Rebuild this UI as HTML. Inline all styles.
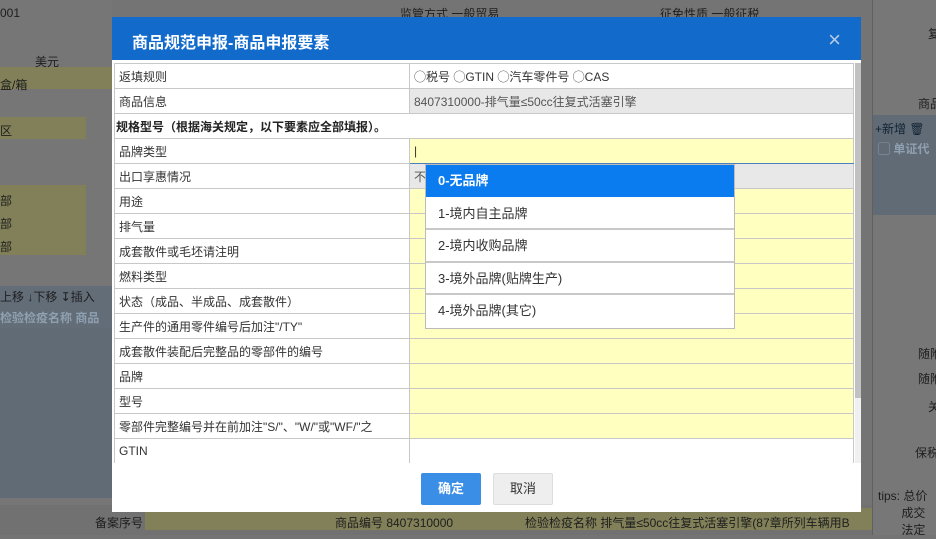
<!DOCTYPE html>
<html><head><meta charset="utf-8"><style>
*{box-sizing:border-box;margin:0;padding:0}
body{width:936px;height:535px;overflow:hidden;position:relative;background:#747474;font-family:"Liberation Sans","Noto Sans CJK SC",sans-serif;font-size:12px;color:#333}
.bg{position:absolute;font-size:12px;color:#1e1e1e;white-space:nowrap}
.ab{position:absolute}
#dlg{position:absolute;left:112px;top:17px;width:749px;height:495px;background:#fff}
#hd{height:43px;background:#126bcb;color:#fff;font-size:16px;font-weight:bold;padding:12px 0 0 20px;position:relative}
#hd .x{position:absolute;right:20px;top:10px;font-weight:normal;font-size:22px;color:#b8cbe6}
table{border-collapse:collapse;position:absolute;left:2px;top:46px;width:740px}
td{border:1px solid #c8c8c8;height:25px;padding:0 4px;font-size:12px;color:#333;vertical-align:middle;white-space:nowrap}
td.k{width:295px}
td.y{background:#ffffc0}
td.g{background:#e8e8e8;color:#555}
#dd{position:absolute;left:425px;top:164px;width:310px;background:#fff;border:1px solid #bbb}
#dd div{height:32.6px;line-height:32px;padding-left:12px;font-size:13px;color:#333;border-bottom:2px solid #c8c8c8}
#dd div.s{background:#0a7cf0;color:#fff;font-weight:bold;border-bottom:1px solid #fff}
</style></head><body>
<div class="ab" style="left:0;top:0;width:112px;height:535px;background:#767676"></div>
<div class="ab" style="left:0;top:67px;width:112px;height:22px;background:#818059"></div>
<div class="ab" style="left:0;top:117px;width:86px;height:22px;background:#818059"></div>
<div class="ab" style="left:0;top:185px;width:86px;height:70px;background:#818059"></div>
<div class="bg" style="left:0;top:6px">001</div>
<div class="bg" style="left:35px;top:53px">美元</div>
<div class="bg" style="left:0;top:76px">盒/箱</div>
<div class="bg" style="left:0;top:122px">区</div>
<div class="bg" style="left:0;top:192px">部</div>
<div class="bg" style="left:0;top:215px">部</div>
<div class="bg" style="left:0;top:238px">部</div>
<div class="ab" style="left:0;top:286px;width:112px;height:42px;background:#636d78"></div>
<div class="bg" style="left:0;top:288px">上移 ↓下移 ↧插入</div>
<div class="bg" style="left:0;top:309px;color:#8fa0b0;font-weight:bold">检验检疫名称 商品</div>
<div class="ab" style="left:0;top:328px;width:112px;height:170px;background:#616b76"></div>
<div class="ab" style="left:0;top:505px;width:936px;height:30px;background:#717171"></div>
<div class="ab" style="left:145px;top:508px;width:750px;height:22px;background:#818059"></div>
<div class="bg" style="left:95px;top:514px">备案序号</div>
<div class="bg" style="left:335px;top:514px">商品编号 8407310000</div>
<div class="bg" style="left:525px;top:514px">检验检疫名称 排气量≤50cc往复式活塞引擎(87章所列车辆用B</div>
<div class="bg" style="left:400px;top:5px">监管方式 一般贸易</div>
<div class="bg" style="left:660px;top:5px">征免性质 一般征税</div>
<div class="ab" style="left:872px;top:0;width:64px;height:535px;background:#777;border-left:1px solid #606060"></div>
<div class="bg" style="left:928px;top:25px">复</div>
<div class="bg" style="left:918px;top:95px">商品</div>
<div class="ab" style="left:873px;top:115px;width:63px;height:100px;background:#616b76"></div>
<div class="bg" style="left:875px;top:120px;color:#123">+新增 🗑</div>
<div class="bg" style="left:878px;top:140px;color:#8fa0b0;font-weight:bold">▢ 单证代</div>
<div class="bg" style="left:918px;top:345px">随附</div>
<div class="bg" style="left:918px;top:370px">随附</div>
<div class="bg" style="left:928px;top:398px">关</div>
<div class="bg" style="left:915px;top:444px">保税</div>
<div class="bg" style="left:878px;top:488px;line-height:17px">tips: 总价<br>&nbsp;&nbsp;&nbsp;&nbsp;&nbsp;&nbsp;&nbsp;成交<br>&nbsp;&nbsp;&nbsp;&nbsp;&nbsp;&nbsp;&nbsp;法定</div>

<div id="dlg">
<div id="hd">商品规范申报-商品申报要素<span class="x">×</span></div>
<table>
<tr><td class="k">返填规则</td><td>◯税号 ◯GTIN ◯汽车零件号 ◯CAS</td></tr>
<tr><td class="k">商品信息</td><td class="g">8407310000-排气量≤50cc往复式活塞引擎</td></tr>
<tr><td colspan="2" style="font-weight:bold;padding-left:1px;color:#222">规格型号（根据海关规定，以下要素应全部填报）。</td></tr>
<tr><td class="k">品牌类型</td><td class="y" style="border-bottom:1px solid #4a7fc0">|</td></tr>
<tr><td class="k">出口享惠情况</td><td class="g">不</td></tr>
<tr><td class="k">用途</td><td class="y"></td></tr>
<tr><td class="k">排气量</td><td class="y"></td></tr>
<tr><td class="k">成套散件或毛坯请注明</td><td class="y"></td></tr>
<tr><td class="k">燃料类型</td><td class="y"></td></tr>
<tr><td class="k">状态（成品、半成品、成套散件）</td><td class="y"></td></tr>
<tr><td class="k">生产件的通用零件编号后加注"/TY"</td><td class="y"></td></tr>
<tr><td class="k">成套散件装配后完整品的零部件的编号</td><td class="y"></td></tr>
<tr><td class="k">品牌</td><td class="y"></td></tr>
<tr><td class="k">型号</td><td class="y"></td></tr>
<tr><td class="k">零部件完整编号并在前加注"S/"、"W/"或"WF/"之</td><td class="y"></td></tr>
<tr><td class="k">GTIN</td><td></td></tr>
</table>
<div class="ab" style="left:0;top:446px;width:749px;height:49px;background:#fff"></div>
<div class="ab" style="left:743px;top:46px;width:6px;height:400px;background:#f0f0f0"></div>
<div class="ab" style="left:743px;top:46px;width:6px;height:335px;background:#c1c1c1"></div>
<div class="ab" style="left:309px;top:456px;width:60px;height:32px;background:#3a8ee6;color:#fff;font-weight:bold;font-size:13px;text-align:center;line-height:32px;border-radius:2px">确定</div>
<div class="ab" style="left:381px;top:456px;width:60px;height:32px;background:#eee;border:1px solid #ddd;color:#333;font-size:13px;text-align:center;line-height:30px;border-radius:2px">取消</div>
</div>
<div id="dd">
<div class="s">0-无品牌</div>
<div>1-境内自主品牌</div>
<div>2-境内收购品牌</div>
<div>3-境外品牌(贴牌生产)</div>
<div style="border-bottom:none">4-境外品牌(其它)</div>
</div>
</body></html>
